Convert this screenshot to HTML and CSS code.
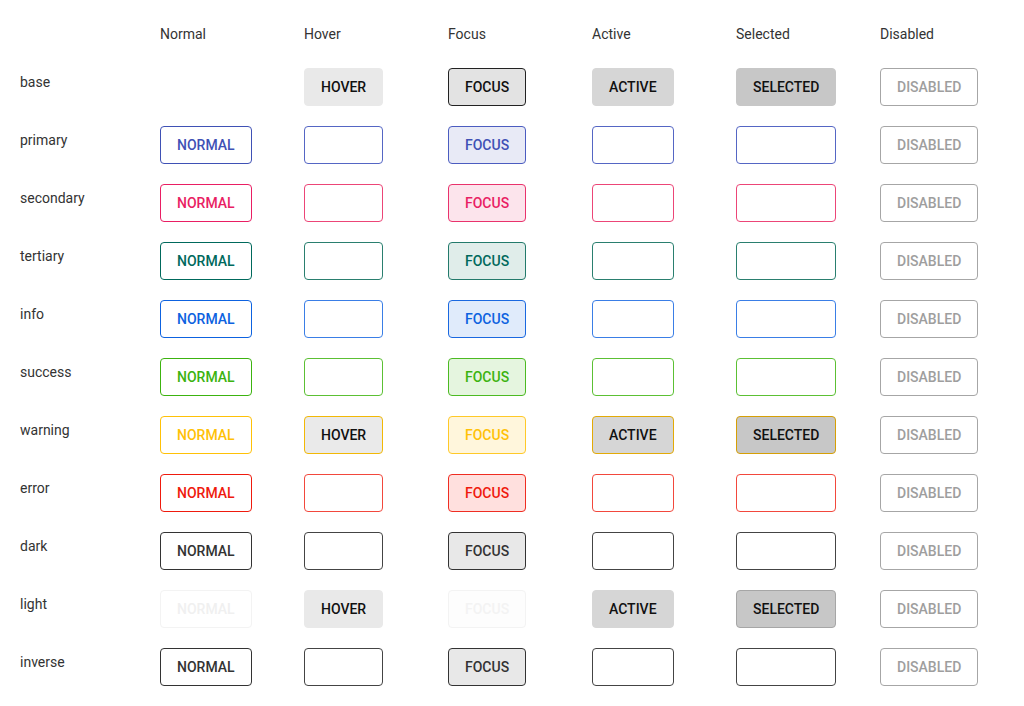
FILE: index.html
```html
<!DOCTYPE html>
<html>
<head>
<meta charset="utf-8">
<link rel="stylesheet" href="styles.css">
</head>
<body>
<div class="grid">
  <div class="head"></div>
  <div class="head">Normal</div>
  <div class="head">Hover</div>
  <div class="head">Focus</div>
  <div class="head">Active</div>
  <div class="head">Selected</div>
  <div class="head">Disabled</div>

  <div class="label">base</div>
  <div class="cell"><button class="btn base normal">NORMAL</button></div>
  <div class="cell"><button class="btn base hover">HOVER</button></div>
  <div class="cell"><button class="btn base focus">FOCUS</button></div>
  <div class="cell"><button class="btn base active">ACTIVE</button></div>
  <div class="cell"><button class="btn base selected">SELECTED</button></div>
  <div class="cell"><button class="btn disabled">DISABLED</button></div>

  <div class="label">primary</div>
  <div class="cell"><button class="btn primary normal">NORMAL</button></div>
  <div class="cell"><button class="btn primary empty">HOVER</button></div>
  <div class="cell"><button class="btn primary focus">FOCUS</button></div>
  <div class="cell"><button class="btn primary empty">ACTIVE</button></div>
  <div class="cell"><button class="btn primary empty">SELECTED</button></div>
  <div class="cell"><button class="btn disabled">DISABLED</button></div>

  <div class="label">secondary</div>
  <div class="cell"><button class="btn secondary normal">NORMAL</button></div>
  <div class="cell"><button class="btn secondary empty">HOVER</button></div>
  <div class="cell"><button class="btn secondary focus">FOCUS</button></div>
  <div class="cell"><button class="btn secondary empty">ACTIVE</button></div>
  <div class="cell"><button class="btn secondary empty">SELECTED</button></div>
  <div class="cell"><button class="btn disabled">DISABLED</button></div>

  <div class="label">tertiary</div>
  <div class="cell"><button class="btn tertiary normal">NORMAL</button></div>
  <div class="cell"><button class="btn tertiary empty">HOVER</button></div>
  <div class="cell"><button class="btn tertiary focus">FOCUS</button></div>
  <div class="cell"><button class="btn tertiary empty">ACTIVE</button></div>
  <div class="cell"><button class="btn tertiary empty">SELECTED</button></div>
  <div class="cell"><button class="btn disabled">DISABLED</button></div>

  <div class="label">info</div>
  <div class="cell"><button class="btn info normal">NORMAL</button></div>
  <div class="cell"><button class="btn info empty">HOVER</button></div>
  <div class="cell"><button class="btn info focus">FOCUS</button></div>
  <div class="cell"><button class="btn info empty">ACTIVE</button></div>
  <div class="cell"><button class="btn info empty">SELECTED</button></div>
  <div class="cell"><button class="btn disabled">DISABLED</button></div>

  <div class="label">success</div>
  <div class="cell"><button class="btn success normal">NORMAL</button></div>
  <div class="cell"><button class="btn success empty">HOVER</button></div>
  <div class="cell"><button class="btn success focus">FOCUS</button></div>
  <div class="cell"><button class="btn success empty">ACTIVE</button></div>
  <div class="cell"><button class="btn success empty">SELECTED</button></div>
  <div class="cell"><button class="btn disabled">DISABLED</button></div>

  <div class="label">warning</div>
  <div class="cell"><button class="btn warning normal">NORMAL</button></div>
  <div class="cell"><button class="btn warning hover">HOVER</button></div>
  <div class="cell"><button class="btn warning focus">FOCUS</button></div>
  <div class="cell"><button class="btn warning active">ACTIVE</button></div>
  <div class="cell"><button class="btn warning selected">SELECTED</button></div>
  <div class="cell"><button class="btn disabled">DISABLED</button></div>

  <div class="label">error</div>
  <div class="cell"><button class="btn error normal">NORMAL</button></div>
  <div class="cell"><button class="btn error empty">HOVER</button></div>
  <div class="cell"><button class="btn error focus">FOCUS</button></div>
  <div class="cell"><button class="btn error empty">ACTIVE</button></div>
  <div class="cell"><button class="btn error empty">SELECTED</button></div>
  <div class="cell"><button class="btn disabled">DISABLED</button></div>

  <div class="label">dark</div>
  <div class="cell"><button class="btn dark normal">NORMAL</button></div>
  <div class="cell"><button class="btn dark empty">HOVER</button></div>
  <div class="cell"><button class="btn dark focus">FOCUS</button></div>
  <div class="cell"><button class="btn dark empty">ACTIVE</button></div>
  <div class="cell"><button class="btn dark empty">SELECTED</button></div>
  <div class="cell"><button class="btn disabled">DISABLED</button></div>

  <div class="label">light</div>
  <div class="cell"><button class="btn light normal">NORMAL</button></div>
  <div class="cell"><button class="btn light hover">HOVER</button></div>
  <div class="cell"><button class="btn light focus">FOCUS</button></div>
  <div class="cell"><button class="btn light active">ACTIVE</button></div>
  <div class="cell"><button class="btn light selected">SELECTED</button></div>
  <div class="cell"><button class="btn disabled">DISABLED</button></div>

  <div class="label">inverse</div>
  <div class="cell"><button class="btn dark normal">NORMAL</button></div>
  <div class="cell"><button class="btn dark empty">HOVER</button></div>
  <div class="cell"><button class="btn dark focus">FOCUS</button></div>
  <div class="cell"><button class="btn dark empty">ACTIVE</button></div>
  <div class="cell"><button class="btn dark empty">SELECTED</button></div>
  <div class="cell"><button class="btn disabled">DISABLED</button></div>
</div>
</body>
</html>
```
FILE: styles.css
```css
html, body {
  margin: 0;
  padding: 0;
  background: #fff;
}
body {
  font-family: Roboto, "Liberation Sans", sans-serif;
  font-size: 14px;
  color: #333;
}
.grid {
  display: grid;
  grid-template-columns: 140px repeat(6, 144px);
  grid-template-rows: 24px;
  grid-auto-rows: 38px;
  row-gap: 20px;
  padding: 24px 0 0 20px;
}
.head {
  line-height: 20px;
  color: #333;
}
.label {
  padding-top: 4px;
  line-height: 20px;
  color: #333;
}
.cell {
  display: flex;
  align-items: flex-start;
}
.btn {
  box-sizing: border-box;
  height: 38px;
  padding: 0 16px;
  border: 1px solid transparent;
  border-radius: 4px;
  background: transparent;
  font-family: Roboto, "Liberation Sans", sans-serif;
  font-size: 14px;
  font-weight: 500;
  line-height: 20px;
  color: #111;
  cursor: pointer;
}
.btn.empty { color: transparent; }

.base.normal { color: transparent; }
.base.hover { background: #e9e9e9; border-color: #e9e9e9; }
.base.focus { background: #e3e3e3; border-color: #222; }
.base.active { background: #d6d6d6; border-color: #d6d6d6; }
.base.selected { background: #c7c7c7; border-color: #c7c7c7; }

.disabled { border-color: #a6a6a6; color: #9e9e9e; }

.primary.normal { border-color: #3f51b5; color: #3f51b5; }
.primary.empty { border-color: #5566c4; }
.primary.focus { border-color: #4b5cc0; background: #e8eaf6; color: #3f51b5; }

.secondary.normal { border-color: #e91e63; color: #e91e63; }
.secondary.empty { border-color: #ec4577; }
.secondary.focus { border-color: #e9326c; background: #fce4ec; color: #e91e63; }

.tertiary.normal { border-color: #00695c; color: #00695c; }
.tertiary.empty { border-color: #2a7f6f; }
.tertiary.focus { border-color: #237a6b; background: #e0edea; color: #00695c; }

.info.normal { border-color: #0d62e0; color: #0d62e0; }
.info.empty { border-color: #3a7ee6; }
.info.focus { border-color: #1a68e0; background: #e0ebfb; color: #0d62e0; }

.success.normal { border-color: #3cb30f; color: #3cb30f; }
.success.empty { border-color: #5cc034; }
.success.focus { border-color: #4cba22; background: #e5f5df; color: #3cb30f; }

.warning.normal { border-color: #ffc107; color: #ffc107; }
.warning.hover { border-color: #f2b806; background: #eaeaea; color: #111; }
.warning.focus { border-color: #ffc928; background: #fff6dc; color: #ffc107; }
.warning.active { border-color: #e3aa06; background: #d6d6d6; color: #111; }
.warning.selected { border-color: #d69f05; background: #c7c7c7; color: #111; }

.error.normal { border-color: #ef1a0d; color: #ef1a0d; }
.error.empty { border-color: #f2483d; }
.error.focus { border-color: #ef2d22; background: #ffe0de; color: #ef1a0d; }

.dark.normal { border-color: #333; color: #333; }
.dark.empty { border-color: #444; }
.dark.focus { border-color: #333; background: #e8e8e8; color: #333; }

.light.normal { border-color: #f3f3f3; color: #f0f0f0; }
.light.hover { border-color: #e9e9e9; background: #e9e9e9; color: #111; }
.light.focus { border-color: #f3f3f3; background: #fdfdfd; color: #f3f3f3; }
.light.active { border-color: #d6d6d6; background: #d6d6d6; color: #111; }
.light.selected { border-color: #a6a6a6; background: #c7c7c7; color: #111; }
```
